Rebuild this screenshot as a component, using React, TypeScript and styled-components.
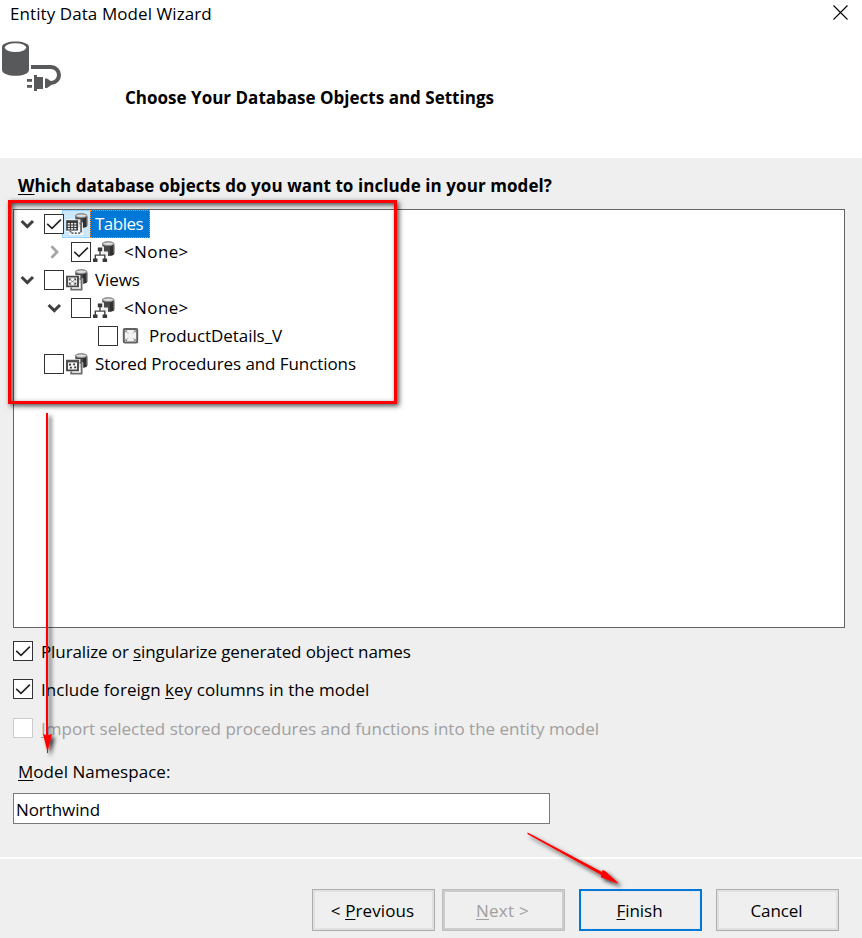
import React from 'react';
import styled, { createGlobalStyle, css } from 'styled-components';

const GlobalStyle = createGlobalStyle`
  * { box-sizing: border-box; }
  html, body { margin: 0; padding: 0; background: #efefef; }
  body { overflow: hidden; }
`;

const Window = styled.div`
  position: relative;
  display: flex;
  flex-direction: column;
  width: 862px;
  height: 938px;
  background: #efefef;
  color: #000;
  font-family: 'Open Sans', 'Noto Sans', sans-serif;
  font-size: 17px;
  line-height: 24px;
  overflow: hidden;
`;

const Text = styled.span<{ $tracking?: number }>`
  white-space: pre;
  letter-spacing: ${(p) => p.$tracking ?? 0}px;
`;

const Mnemonic = styled.span`
  text-decoration: underline;
  text-decoration-thickness: 1px;
  text-underline-offset: 2px;
  text-decoration-skip-ink: none;
`;

const Header = styled.header`
  height: 158px;
  background: #fff;
`;

const TitleBar = styled.div`
  display: flex;
  justify-content: space-between;
  align-items: flex-start;
  height: 41px;
  padding: 2px 13px 0 10px;
`;

const CloseButton = styled.button`
  width: 17px;
  height: 17px;
  margin-top: 2px;
  padding: 0;
  border: 0;
  background: none;
  svg { display: block; }
`;

const Banner = styled.div`
  display: flex;
  align-items: flex-start;
  svg { flex: none; width: 64px; height: 52px; }
`;

const BannerTitle = styled.h1`
  margin: 45px 0 0 61px;
  font-size: 17px;
  font-weight: 700;
  line-height: 24px;
`;

const Body = styled.main`
  display: flex;
  flex-direction: column;
  height: 699px;
  padding: 16px 17px 0 13px;
`;

const Question = styled.h2`
  margin: 0 0 11px 5px;
  font-size: 17px;
  font-weight: 700;
  line-height: 24px;
`;

const Tree = styled.div`
  flex: none;
  height: 419px;
  border: 1px solid #646464;
  background: #fff;
`;

const TreeRow = styled.div<{ $level: number }>`
  display: flex;
  align-items: center;
  height: 28px;
  padding-left: ${(p) => p.$level * 27 + 5}px;
`;

const Expander = styled.span`
  display: flex;
  width: 25px;
  height: 16px;
`;

const Check = styled.span<{ $disabled?: boolean }>`
  display: flex;
  flex: none;
  width: 20px;
  height: 20px;
  border: 1px solid ${(p) => (p.$disabled ? '#cccccc' : '#333333')};
  background: #fff;
  z-index: 1;
`;

const IconCell = styled.span<{ $selected?: boolean }>`
  display: flex;
  align-items: center;
  width: 28px;
  height: 28px;
  margin-left: -2px;
  padding-left: 3px;
  border: 1px solid transparent;
  border-right: 0;
  ${(p) =>
    p.$selected &&
    css`
      background: #cce8ff;
      border-color: #99d1ff;
    `}
`;

const NodeLabel = styled.span<{ $selected?: boolean; $indent: number }>`
  display: flex;
  align-items: center;
  height: 28px;
  padding: 0 6px 0 ${(p) => p.$indent}px;
  border: 1px solid transparent;
  ${(p) =>
    p.$selected &&
    css`
      background: #0078d7;
      color: #fff;
      border: 1px dotted #ff8728;
    `}
`;

const OptionRow = styled.label<{ $top: number; $disabled?: boolean }>`
  display: flex;
  align-items: center;
  gap: 8px;
  height: 24px;
  margin-top: ${(p) => p.$top}px;
  color: ${(p) => (p.$disabled ? '#a0a0a0' : '#000')};
  ${Text} { padding-top: 1px; }
`;

const FieldLabel = styled.label`
  margin: 20px 0 0 5px;
`;

const Field = styled.div`
  display: flex;
  align-items: center;
  width: 537px;
  height: 31px;
  margin-top: 9px;
  padding: 2px 2px 0;
  border: 1px solid #7a7a7a;
  background: #fff;
`;

const Footer = styled.footer`
  display: flex;
  align-items: flex-start;
  height: 81px;
  padding: 30px 0 0 312px;
  border-top: 2px solid #fff;
`;

type ButtonKind = 'normal' | 'disabled' | 'primary';
const buttonLook = {
  normal: css`border: 1px solid #adadad; box-shadow: inset 0 0 0 2px #e1e1e1;`,
  disabled: css`border: 1px solid #bfbfbf; box-shadow: inset 0 0 0 2px #cccccc; color: #a0a0a0;`,
  primary: css`border: 2px solid #0078d7; box-shadow: inset 0 0 0 1px #e6ebef;`,
};

const Button = styled.button<{ $kind: ButtonKind; $gap: number }>`
  display: flex;
  align-items: center;
  justify-content: center;
  width: 123px;
  height: 42px;
  margin: 0 ${(p) => p.$gap}px 0 0;
  padding: 2px 2px 0 0;
  background: #efefef;
  color: #000;
  font: inherit;
  ${(p) => buttonLook[p.$kind]}
`;

const Highlight = styled.div`
  position: absolute;
  left: 8px;
  top: 200px;
  width: 389px;
  height: 204px;
  border: 3px solid #fe0000;
  box-shadow: 2px 2px 5px rgba(0, 0, 0, 0.7), inset 2px 2px 5px rgba(0, 0, 0, 0.7);
  pointer-events: none;
  z-index: 2;
`;

const Arrows = styled.svg`
  position: absolute;
  inset: 0;
  pointer-events: none;
  z-index: 2;
`;

const CheckMark = () => (
  <svg width="18" height="18" viewBox="0 0 18 18" fill="none">
    <path d="M2.2 8.8 7 13.3 15.9 4.7" stroke="#222" strokeWidth="1.6" />
  </svg>
);

const Chevron = ({ open }: { open: boolean }) => (
  <svg width="16" height="16" viewBox="0 0 16 16" fill="none">
    {open ? (
      <path d="M2.6 5 8.3 10.6 14 5" stroke="#404040" strokeWidth="3" />
    ) : (
      <path d="M5.5 2.3 11 8l-5.5 5.7" stroke="#a6a6a6" strokeWidth="2.8" />
    )}
  </svg>
);

const DatabasePlug = () => (
  <svg viewBox="0 0 64 52">
    <path d="M2 6C2-1.4 29-1.4 29 6v23C29 36.7 2 36.7 2 29Z" fill="#58595b" />
    <ellipse cx="15.5" cy="6.6" rx="10.7" ry="4.4" fill="#fff" />
    <path d="M31 26h20a8 8 0 0 1 0 16h-4" fill="none" stroke="#58595b" strokeWidth="4" />
    <path d="M45 37.5h2l4 2.7v4l-4 2.8h-2Z" fill="#58595b" />
    <path d="M34 34h3v2h6v12h-6v2h-3V34Z" fill="#58595b" />
    <path d="M27 38h5v2.8h-5Zm0 6h5v2.8h-5Z" fill="#58595b" />
  </svg>
);

const Cylinder = () => (
  <>
    <path d="M9.3 2.8C9.3-.4 21.2-.4 21.2 2.8v9.8c0 3.2-11.9 3.2-11.9 0Z" fill="#484848" />
    <path d="M17 5.2c2 0 4.2-.8 4.2-2v9.4c0 1.2-2.2 2-4.2 2Z" fill="#2f2f2f" />
    <path d="M9.7 3.5v9M20.9 3.5v9" stroke="#8a8a8a" strokeWidth=".9" />
    <ellipse cx="15.25" cy="2.7" rx="5.4" ry="1.8" fill="#dedede" stroke="#858585" strokeWidth=".8" />
  </>
);

type NodeKind = 'tables' | 'schema' | 'views' | 'view' | 'procedures';

const Stack = ({ children }: { children: React.ReactNode }) => (
  <>
    <path d="M0 6h14.4v3.2h2.8V22H4.4v-3.3H0Z" fill="#fff" opacity=".85" />
    <path d="M13.6 9.8h2v10.8H5.2v-2" fill="none" stroke="#6c6c6c" strokeWidth="1.8" />
    <path d="M1 7.6h11v9.8H1Z" fill="#f4f4f4" stroke="#484848" strokeWidth="1.9" />
    {children}
  </>
);

const NodeIcon = ({ kind }: { kind: NodeKind }) => {
  if (kind === 'view') {
    return (
      <svg width="20" height="18" viewBox="-2 0 20 18">
        <rect x="1.8" y="2" width="13.4" height="13.4" rx="1" fill="#f1f1f1" stroke="#606060" strokeWidth="2" />
        <path d="m4.3 4.5 2 2m6.4-2-2 2m-6.4 6.4 2-2m6.4 2-2-2" stroke="#aaa" strokeWidth="1" />
        <path d="M3.4 3.6h2L3.4 5.6Zm10.2 0h-2l2 2ZM3.4 13.8h2l-2-2Zm10.2 0h-2l2-2Z" fill="#555" />
      </svg>
    );
  }
  return (
    <svg width="22" height="22" viewBox="0 0 22 22">
      <Cylinder />
      {kind === 'schema' && (
        <>
          <path d="M4 5.5h7v5h4v11H-1V13h5Z" fill="#fff" opacity=".9" />
          <path d="M7 8v5.5M2.3 19v-4.9h9.5V19" fill="none" stroke="#444" strokeWidth="1.4" />
          <path d="M4.8 6.6h4.4v3.6H4.8ZM0 17.4h4.5V21H0Zm9.6 0h4.5V21H9.6Z" fill="#383838" />
        </>
      )}
      {kind === 'tables' && (
        <>
          <path d="M0 6.3h14.4v3.2h2.6V22H3v-3.3H0Z" fill="#fff" opacity=".85" />
          <path d="M13.5 10.2h1.6v9.9H4.5v-2" fill="none" stroke="#666" strokeWidth="1.9" strokeDasharray="11 1.4 2 1.4 2 1.4 2 1.4" />
          <path d="M.2 7.2h11.8v10.4H.2Z" fill="#3c3c3c" />
          <path d="M1.8 9.9h2.1v1.5H1.8Zm3.2 0h2.1v1.5H5Zm3.2 0h2.1v1.5H8.2ZM1.8 12.5h2.1V14H1.8Zm3.2 0h2.1V14H5Zm3.2 0h2.1V14H8.2ZM1.8 15h2.1v1.4H1.8ZM5 15h2.1v1.4H5Zm3.2 0h2.1v1.4H8.2Z" fill="#e6e6e6" />
        </>
      )}
      {kind === 'views' && (
        <Stack>
          <path d="M2.8 9.5h2.8L2.8 12Zm7.4 0H7.4l2.8 2.5ZM2.8 15.5h2.8L2.8 13Zm7.4 0H7.4l2.8-2.5Z" fill="#333" />
          <path d="m3.3 10 6.4 5m0-5-6.4 5" stroke="#777" strokeWidth=".7" />
        </Stack>
      )}
      {kind === 'procedures' && (
        <Stack>
          <path d="M.3 7h12.4v2.4H.3Z" fill="#505050" />
          <path d="M3 10.8h2v1.6H3Zm4.2-.2H9v1.6H7.2ZM4 13.8h1.8v1.6H4Zm4.2-.2h2v1.7h-2Z" fill="#333" />
        </Stack>
      )}
    </svg>
  );
};

interface TreeNode {
  level: number;
  open?: boolean;
  checked?: boolean;
  kind: NodeKind;
  label: string;
  tracking: number;
  indent: number;
  selected?: boolean;
}

const nodes: TreeNode[] = [
  { level: 0, open: true, checked: true, kind: 'tables', label: 'Tables', tracking: -0.5, indent: 4, selected: true },
  { level: 1, open: false, checked: true, kind: 'schema', label: '<None>', tracking: 0.38, indent: 6 },
  { level: 0, open: true, kind: 'views', label: 'Views', tracking: -0.1, indent: 4 },
  { level: 1, open: true, kind: 'schema', label: '<None>', tracking: 0.38, indent: 6 },
  { level: 2, kind: 'view', label: 'ProductDetails_V', tracking: -0.06, indent: 4 },
  { level: 0, kind: 'procedures', label: 'Stored Procedures and Functions', tracking: -0.08, indent: 4 },
];

export default function App() {
  return (
    <Window>
      <GlobalStyle />
      <Header>
        <TitleBar>
          <Text $tracking={0.08}>Entity Data Model Wizard</Text>
          <CloseButton aria-label="Close">
            <svg width="17" height="17" viewBox="0 0 17 17">
              <path d="m1.5 1.5 14 14m0-14-14 14" stroke="#000" strokeWidth="1.1" />
            </svg>
          </CloseButton>
        </TitleBar>
        <Banner>
          <DatabasePlug />
          <BannerTitle>
            <Text $tracking={0.01}>Choose Your Database Objects and Settings</Text>
          </BannerTitle>
        </Banner>
      </Header>
      <Body>
        <Question>
          <Text $tracking={0.082}>
            <Mnemonic>W</Mnemonic>hich database objects do you want to include in your model?
          </Text>
        </Question>
        <Tree>
          {nodes.map((n, i) => (
            <TreeRow key={i} $level={n.level}>
              <Expander>{n.open !== undefined && <Chevron open={n.open} />}</Expander>
              <Check>{n.checked && <CheckMark />}</Check>
              <IconCell $selected={n.selected}>
                <NodeIcon kind={n.kind} />
              </IconCell>
              <NodeLabel $selected={n.selected} $indent={n.indent}>
                <Text $tracking={n.tracking}>{n.label}</Text>
              </NodeLabel>
            </TreeRow>
          ))}
        </Tree>
        <OptionRow $top={11}>
          <Check><CheckMark /></Check>
          <Text $tracking={-0.105}>
            Pluralize or <Mnemonic>s</Mnemonic>ingularize generated object names
          </Text>
        </OptionRow>
        <OptionRow $top={14}>
          <Check><CheckMark /></Check>
          <Text $tracking={0.055}>
            Include foreign <Mnemonic>k</Mnemonic>ey columns in the model
          </Text>
        </OptionRow>
        <OptionRow $top={15} $disabled>
          <Check $disabled />
          <Text $tracking={0.006}>
            <Mnemonic>I</Mnemonic>mport selected stored procedures and functions into the entity model
          </Text>
        </OptionRow>
        <FieldLabel>
          <Text $tracking={0.04}><Mnemonic>M</Mnemonic>odel Namespace:</Text>
        </FieldLabel>
        <Field>
          <Text $tracking={-0.08}>Northwind</Text>
        </Field>
      </Body>
      <Footer>
        <Button $kind="normal" $gap={7}>
          <Text $tracking={0.1}>{'< '}<Mnemonic>P</Mnemonic>revious</Text>
        </Button>
        <Button $kind="disabled" $gap={14}>
          <Text $tracking={0.25}><Mnemonic>N</Mnemonic>{'ext >'}</Text>
        </Button>
        <Button $kind="primary" $gap={14}>
          <Text $tracking={-0.05}><Mnemonic>F</Mnemonic>inish</Text>
        </Button>
        <Button $kind="normal" $gap={0}>
          <Text $tracking={-0.1}>Cancel</Text>
        </Button>
      </Footer>
      <Highlight />
      <Arrows width="862" height="938" viewBox="0 0 862 938">
        <defs>
          <filter id="arrowShadow" filterUnits="userSpaceOnUse" x="0" y="380" width="862" height="558">
            <feDropShadow dx="3" dy="3" stdDeviation="2.2" floodColor="#000" floodOpacity=".8" />
          </filter>
        </defs>
        <g filter="url(#arrowShadow)" fill="#fe0000">
          <path d="M46 413h2v322l4-1-4 16v3h-1v-3l-4-16 3 1Z" />
          <path d="m527.6 832.4 74.5 39.6.3-2 2.5.8 13.4 12.3-.8.4-16.7-6.2.4-2.4-73.8-40.8Z" />
        </g>
      </Arrows>
    </Window>
  );
}
